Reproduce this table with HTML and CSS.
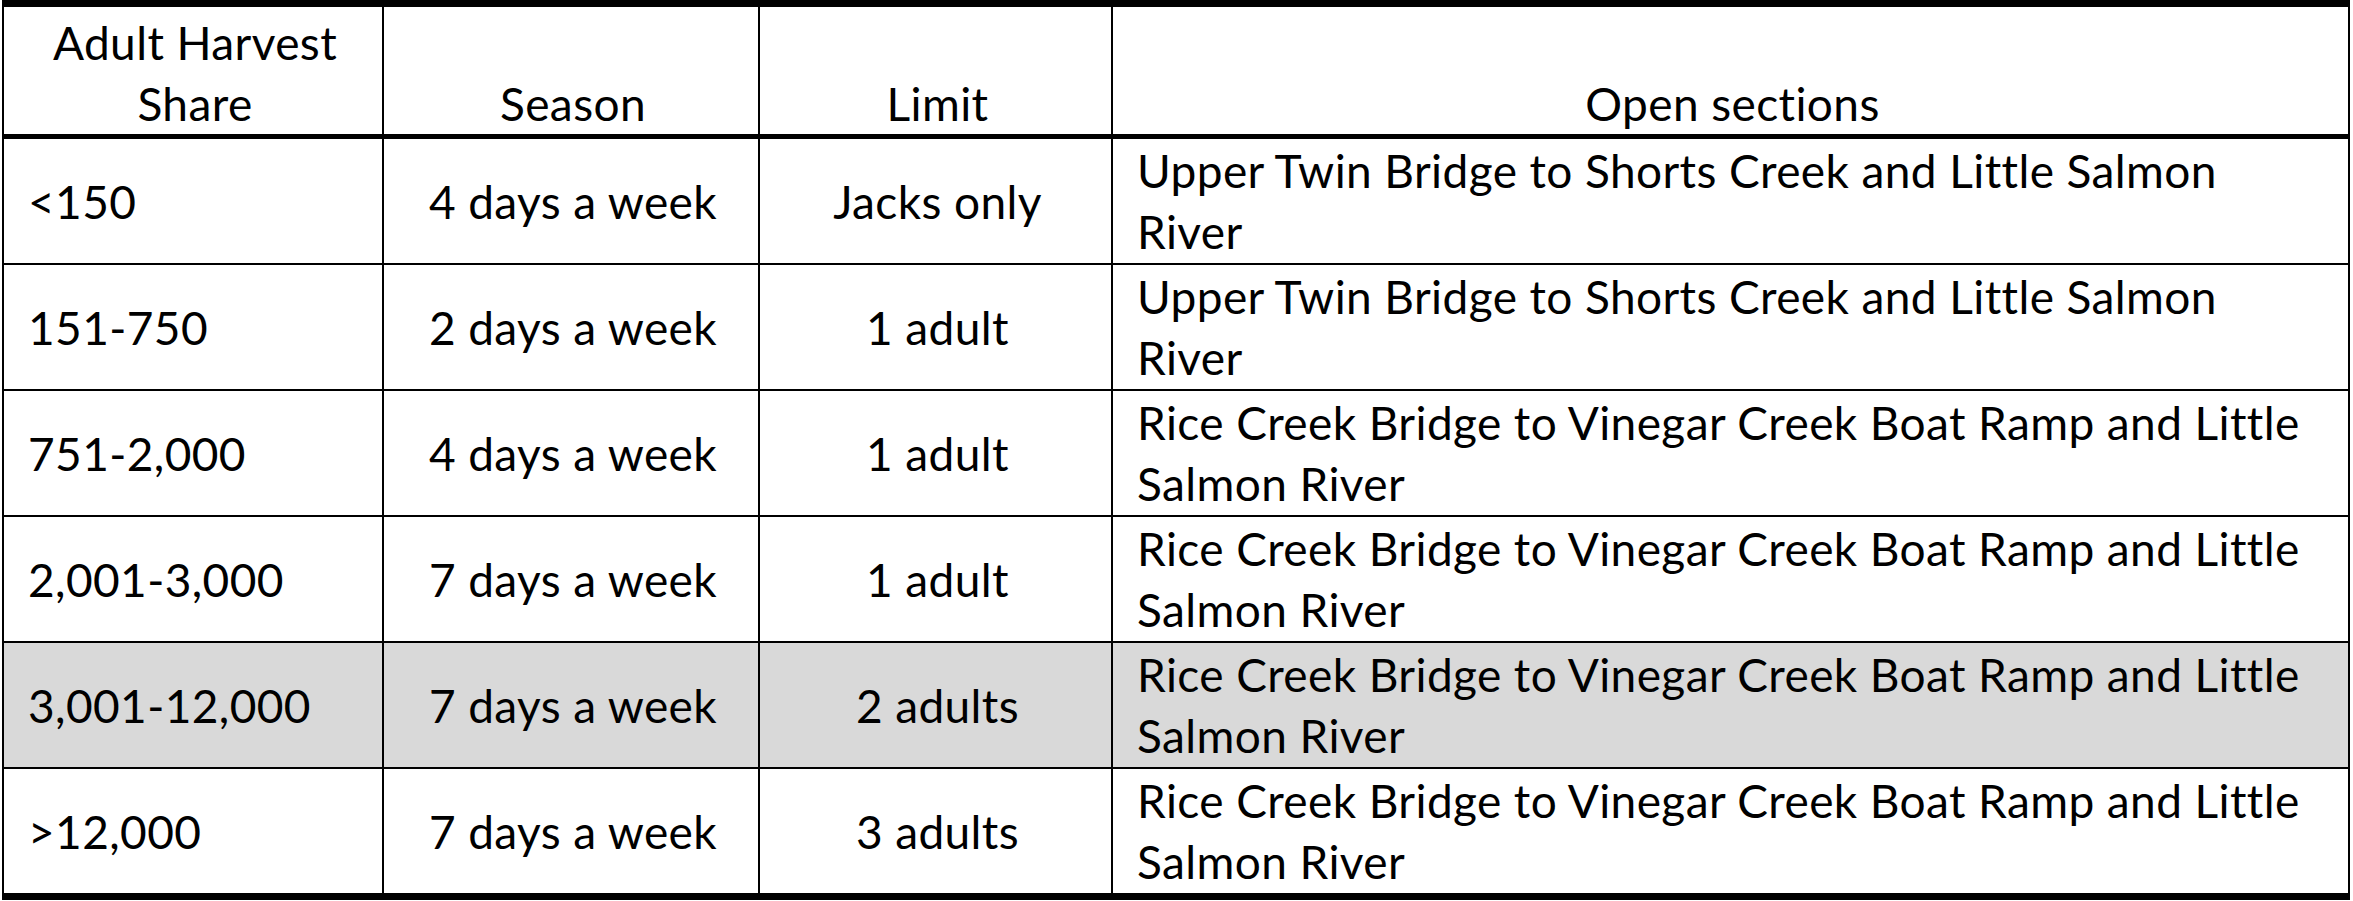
FILE: index.html
```html
<!DOCTYPE html>
<html lang="en">
<head>
<meta charset="utf-8">
<title>Adult Harvest Share</title>
<link rel="stylesheet" href="styles.css">
</head>
<body>
<table class="grid">
  <colgroup>
    <col class="c1">
    <col class="c2">
    <col class="c3">
    <col class="c4">
  </colgroup>
  <thead>
    <tr class="head">
      <th>Adult Harvest<br>Share</th>
      <th>Season</th>
      <th>Limit</th>
      <th>Open sections</th>
    </tr>
  </thead>
  <tbody>
    <tr>
      <td class="share">&lt;150</td>
      <td class="mid">4 days a week</td>
      <td class="mid">Jacks only</td>
      <td class="sect">Upper Twin Bridge to Shorts Creek and Little Salmon<br>River</td>
    </tr>
    <tr>
      <td class="share">151-750</td>
      <td class="mid">2 days a week</td>
      <td class="mid">1 adult</td>
      <td class="sect">Upper Twin Bridge to Shorts Creek and Little Salmon<br>River</td>
    </tr>
    <tr>
      <td class="share">751-2,000</td>
      <td class="mid">4 days a week</td>
      <td class="mid">1 adult</td>
      <td class="sect">Rice Creek Bridge to Vinegar Creek Boat Ramp and Little<br>Salmon River</td>
    </tr>
    <tr>
      <td class="share">2,001-3,000</td>
      <td class="mid">7 days a week</td>
      <td class="mid">1 adult</td>
      <td class="sect">Rice Creek Bridge to Vinegar Creek Boat Ramp and Little<br>Salmon River</td>
    </tr>
    <tr class="shade">
      <td class="share">3,001-12,000</td>
      <td class="mid">7 days a week</td>
      <td class="mid">2 adults</td>
      <td class="sect">Rice Creek Bridge to Vinegar Creek Boat Ramp and Little<br>Salmon River</td>
    </tr>
    <tr>
      <td class="share">&gt;12,000</td>
      <td class="mid">7 days a week</td>
      <td class="mid">3 adults</td>
      <td class="sect">Rice Creek Bridge to Vinegar Creek Boat Ramp and Little<br>Salmon River</td>
    </tr>
  </tbody>
</table>
</body>
</html>
```
FILE: styles.css
```css
html, body {
  margin: 0;
  padding: 0;
  background: #ffffff;
}

body {
  font-family: "Lato", "Liberation Sans", sans-serif;
  font-size: 46px;
  letter-spacing: 0.4px;
  line-height: 61px;
  color: #000000;
}

.grid {
  margin-left: 2px;
  width: 2348px;
  table-layout: fixed;
  border-collapse: collapse;
  border-top: 7px solid #000;
  border-bottom: 7px solid #000;
  border-left: 2px solid #000;
  border-right: 2px solid #000;
}

.c1 { width: 380px; }
.c2 { width: 376px; }
.c3 { width: 353px; }
.c4 { width: 1237px; }

.grid th,
.grid td {
  border-left: 2px solid #000;
  border-right: 2px solid #000;
  padding: 0 20px 0 24px;
  font-weight: normal;
  white-space: nowrap;
}

.head th {
  height: 127px;
  vertical-align: bottom;
  text-align: center;
  border-bottom: 5px solid #000;
  padding-bottom: 0;
}

.grid tbody td {
  height: 124px;
  vertical-align: middle;
  border-bottom: 2px solid #000;
}

.grid tbody tr:last-child td {
  border-bottom: 7px solid #000;
}

.share { text-align: left; }
.mid { text-align: center; }
.sect { text-align: left; }

.shade td {
  background: #d9d9d9;
}
```
